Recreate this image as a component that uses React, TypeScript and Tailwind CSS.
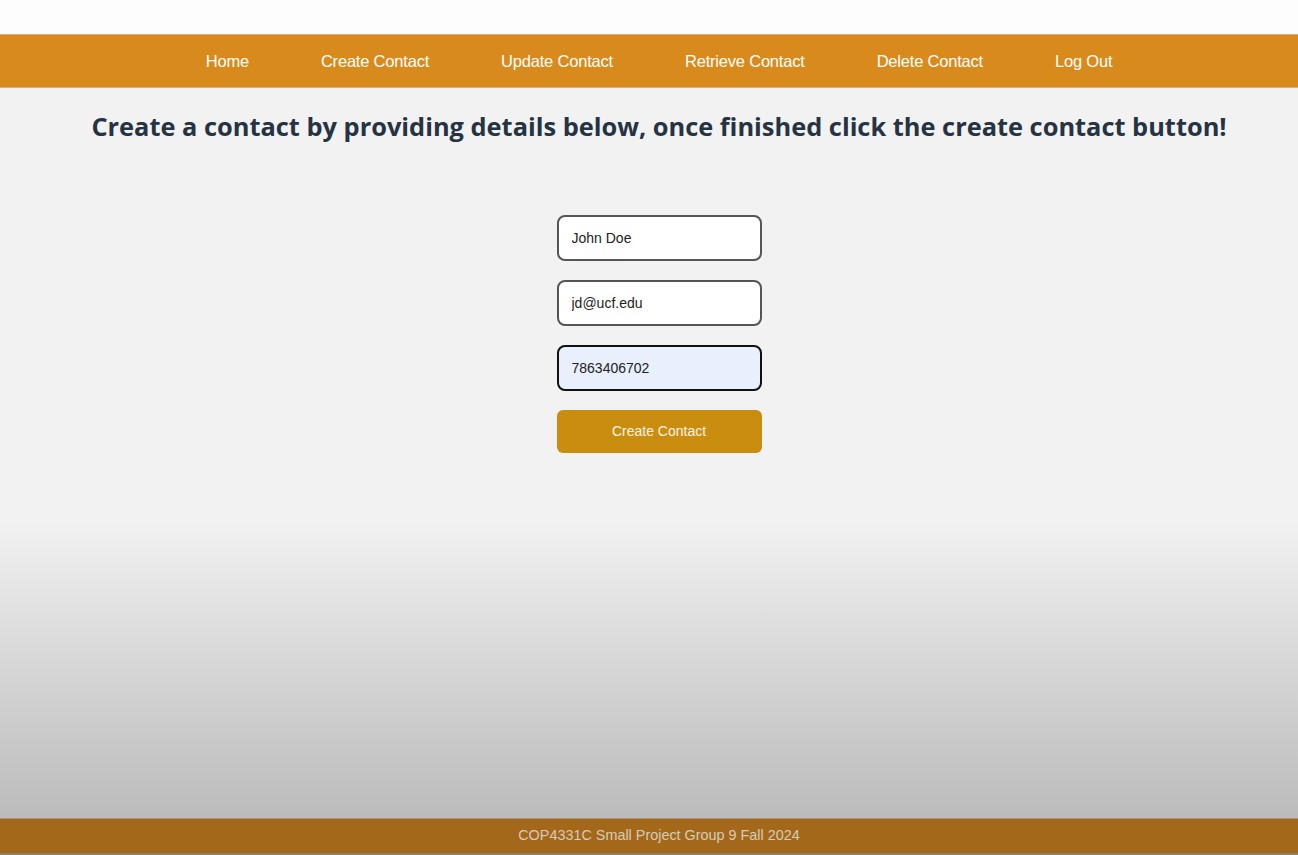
import React, { useState } from 'react';

const links = ['Home', 'Create Contact', 'Update Contact', 'Retrieve Contact', 'Delete Contact', 'Log Out'];

export default function App() {
  const [name, setName] = useState('John Doe');
  const [email, setEmail] = useState('jd@ucf.edu');
  const [phone, setPhone] = useState('7863406702');

  return (
    <div className="flex h-[855px] flex-col bg-[#f2f2f2] font-['Liberation_Sans',Arial,sans-serif]">
      <div className="h-[34px] shrink-0 bg-[#fdfdfd]" />

      <nav className="flex h-[54px] shrink-0 items-center justify-center gap-[72px] bg-[#d88b1c] pl-[20px] text-[16.5px] text-white border-y border-[#e0b070]">
        {links.map((l) => (
          <a key={l} href="#" className="tracking-[-0.2px]">
            {l}
          </a>
        ))}
      </nav>

      <main className="flex flex-1 flex-col items-center bg-gradient-to-b from-[#f2f2f2] from-[59%] to-[#bbbbbb]">
        <h1 className="mt-[20px] pl-[20px] font-['Open_Sans',sans-serif] text-[25.4px] font-bold leading-[36px] text-[#253342]">
          Create a contact by providing details below, once finished click the create contact button!
        </h1>

        <form className="mt-[71px] ml-[20px] flex w-[205px] flex-col gap-[19px]" onSubmit={(e) => e.preventDefault()}>
          <input
            value={name}
            onChange={(e) => setName(e.target.value)}
            className="h-[46px] rounded-[8px] border-2 border-[#555] bg-white px-[13px] text-[14px] text-[#222] outline-none"
          />
          <input
            value={email}
            onChange={(e) => setEmail(e.target.value)}
            className="h-[46px] rounded-[8px] border-2 border-[#555] bg-white px-[13px] text-[14px] text-[#222] outline-none"
          />
          <input
            value={phone}
            onChange={(e) => setPhone(e.target.value)}
            className="h-[46px] rounded-[8px] border-2 border-[#111] bg-[#e8f0fe] px-[13px] text-[14px] text-[#222] outline-none"
          />
          <button
            type="submit"
            className="h-[43px] rounded-[6px] bg-[#c98e10] text-[14px] text-[#fbf3e6]"
          >
            Create Contact
          </button>
        </form>
      </main>

      <footer className="flex h-[35px] shrink-0 items-center justify-center border-t border-[#b09070] bg-[#a4681a] pl-[20px] text-[14.4px] text-[#d4ccbc]">
        COP4331C Small Project Group 9 Fall 2024
      </footer>
      <div className="h-[2px] shrink-0 bg-[#8a8070]" />
    </div>
  );
}
